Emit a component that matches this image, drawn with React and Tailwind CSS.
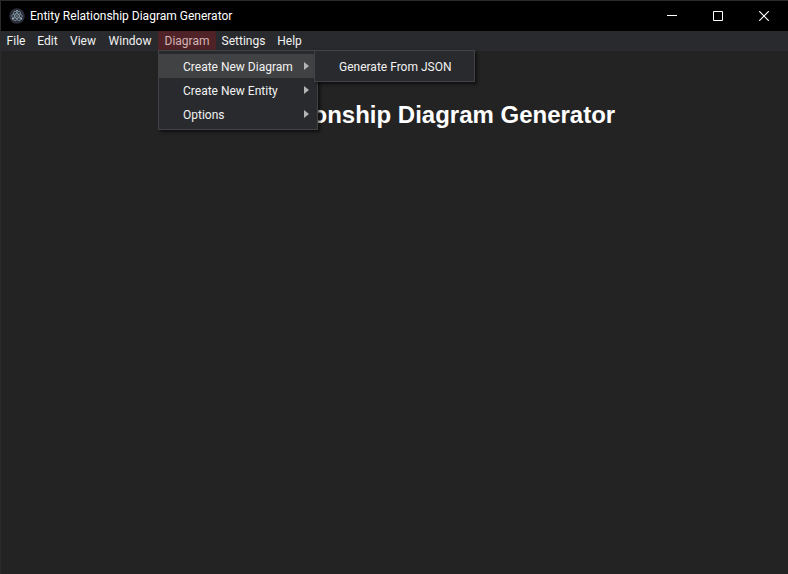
import React from "react";

function AppIcon() {
  return (
    <svg className="h-4 w-4 shrink-0" viewBox="0 0 16 16" fill="none" aria-hidden="true">
      <circle cx="8" cy="8" r="7.8" fill="#2b2e38" />
      <g stroke="#a9c8d4" strokeOpacity="0.7" strokeWidth="0.7">
        <ellipse cx="8" cy="8" rx="5.4" ry="2.1" />
        <ellipse cx="8" cy="8" rx="5.4" ry="2.1" transform="rotate(60 8 8)" />
        <ellipse cx="8" cy="8" rx="5.4" ry="2.1" transform="rotate(120 8 8)" />
      </g>
      <g fill="#b5d3dc">
        <circle cx="8" cy="8" r="0.7" />
        <circle cx="3.6" cy="10.8" r="0.8" />
        <circle cx="12.4" cy="10.8" r="0.8" />
        <circle cx="8" cy="2.8" r="0.8" />
      </g>
    </svg>
  );
}

function WindowButton({ label, children }) {
  return (
    <button type="button" aria-label={label} className="flex w-[46px] items-center justify-center">
      <svg
        className="h-[10px] w-[10px]"
        viewBox="0 0 10 10"
        fill="none"
        stroke="#ffffff"
        aria-hidden="true"
      >
        {children}
      </svg>
    </button>
  );
}

function TitleBar() {
  return (
    <header className="flex h-[30px] bg-black">
      <div className="flex flex-1 items-center gap-[5px] pl-2">
        <AppIcon />
        <span className="whitespace-nowrap text-[12px] leading-4 text-white">
          Entity Relationship Diagram Generator
        </span>
      </div>
      <div className="flex pr-px">
        <WindowButton label="Minimize">
          <path d="M0 4.5H10" />
        </WindowButton>
        <WindowButton label="Maximize">
          <path d="M0.5 0.5H9.5V9.5H0.5Z" />
        </WindowButton>
        <WindowButton label="Close">
          <path d="M0.2 0.2L9.8 9.8M9.8 0.2L0.2 9.8" strokeWidth="1.2" />
        </WindowButton>
      </div>
    </header>
  );
}

const PANEL =
  "absolute border border-[#414346] bg-[#292a2d] py-[3px] shadow-[2px_2px_3px_rgba(0,0,0,0.6)]";

function MenuRow({ label, open, children }) {
  return (
    <li className="relative">
      <button
        type="button"
        className={
          "flex h-6 w-full items-center justify-between whitespace-nowrap pl-6 pr-2 text-left " +
          (open ? "bg-[#414244]" : "")
        }
      >
        <span className="pt-px">{label}</span>
        <svg className="h-2 w-[5px]" viewBox="0 0 5 8" fill="#b4b4b4" aria-hidden="true">
          <path d="M0 0L5 4L0 8Z" />
        </svg>
      </button>
      {children}
    </li>
  );
}

function DiagramMenu() {
  return (
    <ul className={PANEL + " left-0 top-[19px] z-10 w-[160px]"}>
      <MenuRow label="Create New Diagram" open>
        <ul className={PANEL + " -top-1 left-[155px] w-[161px]"}>
          <li>
            <button type="button" className="flex h-6 w-full items-center whitespace-nowrap pl-6">
              <span className="pt-px">Generate From JSON</span>
            </button>
          </li>
        </ul>
      </MenuRow>
      <MenuRow label="Create New Entity" />
      <MenuRow label="Options" />
    </ul>
  );
}

const MENUS = [
  { label: "File", width: "w-[30px]" },
  { label: "Edit", width: "w-[33px]" },
  { label: "View", width: "w-[38px]" },
  { label: "Window", width: "w-[56px]" },
  { label: "Diagram", width: "w-[58px]", open: true },
  { label: "Settings", width: "w-[55px]" },
  { label: "Help", width: "w-[37px]" },
];

function MenuBar() {
  return (
    <nav className="bg-[#292a2d] text-[12px] leading-4 text-[#f2f2f2]">
      <ul className="flex h-5">
        {MENUS.map(({ label, width, open }) => (
          <li key={label} className={"relative flex " + width}>
            <button
              type="button"
              className={
                "flex flex-1 items-center justify-center whitespace-nowrap " +
                (open ? "bg-[#4f2227] text-[#d3b3b5]" : "")
              }
            >
              {label}
            </button>
            {open && <DiagramMenu />}
          </li>
        ))}
      </ul>
    </nav>
  );
}

export default function App() {
  return (
    <div className="flex min-h-screen flex-col border-l border-t border-[#2b2b2b] bg-[#232323] font-[Roboto,'Noto_Sans',sans-serif]">
      <TitleBar />
      <MenuBar />
      <main className="flex-1 pt-[50px] text-center">
        <h1 className="font-['Liberation_Sans',Arial,sans-serif] text-2xl font-bold leading-7 text-white">
          Entity Relationship Diagram Generator
        </h1>
      </main>
    </div>
  );
}
